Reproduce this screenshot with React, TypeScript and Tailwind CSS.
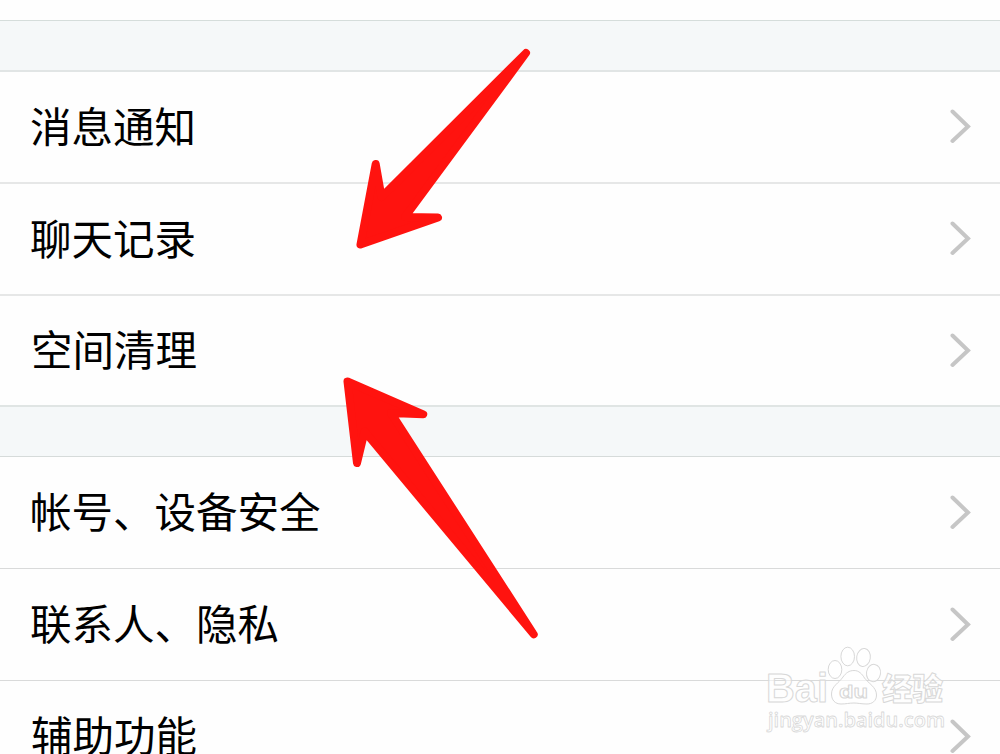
const notifyItems = ['消息通知', '聊天记录', '空间清理'];
const accountItems = ['帐号、设备安全', '联系人、隐私', '辅助功能'];

const Chevron = () => (
  <svg className="h-9 w-6 shrink-0" viewBox="0 0 24 36" fill="none">
    <path d="M4.500 2.500L20 17.500L4.500 32" stroke="#c6c6c6" strokeWidth="4" strokeLinecap="round" />
  </svg>
);

const Row = ({ label, className }: { label: string; className: string }) => (
  <button className={`flex w-full shrink-0 items-center justify-between pl-[30px] pr-[28px] text-left ${className}`}>
    <span className="pb-[3px] text-[41.5px] leading-none">{label}</span>
    <Chevron />
  </button>
);

const Arrows = () => (
  <svg className="pointer-events-none absolute inset-0" width="1000" height="754" viewBox="0 0 1000 754">
    <g fill="#ff130f" stroke="#ff130f" strokeWidth="8" strokeLinejoin="round">
      <path d="M526 53L381.500 197L375.700 164L360.500 244.500L438 217.500L405 217Z" />
      <path d="M347.500 381.500L423.200 414.300L391 413L533.700 634.300L364.600 431.500L357 463Z" />
    </g>
  </svg>
);

const Watermark = () => (
  <svg
    className="pointer-events-none absolute bottom-0 right-0"
    width="250"
    height="124"
    viewBox="0 0 250 124"
    fill="#fff"
    fillOpacity="0.6"
    stroke="#d8d8d8"
    strokeWidth="1"
    strokeLinejoin="round"
  >
    <text x="16" y="72" fontSize="40" fontWeight="700" textLength="62" lengthAdjust="spacingAndGlyphs" className="font-['Liberation_Sans',sans-serif]">Bai</text>
    <ellipse cx="85" cy="39.500" rx="6.800" ry="9" />
    <ellipse cx="97.700" cy="26.500" rx="6.800" ry="9.300" />
    <ellipse cx="113.500" cy="27.500" rx="6.800" ry="9" transform="rotate(8 113.500 27.500)" />
    <ellipse cx="123.500" cy="43" rx="7" ry="8.700" transform="rotate(8 123.500 43)" />
    <path d="M104 40.500C109 40.500 112 44 114.500 48C118 53 126.500 57 126.500 65C126.500 71 122 74 117 74C111 74 108 73 104 73C99 73 96 74 91 74C85 74 81.500 70 81.500 64C81.500 56 89 53 93 47C96 43 99 40.500 104 40.500Z" />
    <text x="89" y="68" fontSize="19" fontWeight="700" textLength="29" lengthAdjust="spacingAndGlyphs" className="font-['Liberation_Sans',sans-serif]">du</text>
    <text x="132" y="70" fontSize="31" fontWeight="900" textLength="61" lengthAdjust="spacingAndGlyphs" className="font-['Noto_Sans_CJK_SC',sans-serif]">经验</text>
    <text x="18" y="97" fontSize="20.500" fontWeight="600" strokeWidth="0.8" textLength="177" lengthAdjust="spacingAndGlyphs" className="font-['Open_Sans',sans-serif]">jingyan.baidu.com</text>
  </svg>
);

export default function App() {
  return (
    <main className="relative flex h-[754px] w-[1000px] flex-col overflow-hidden bg-[#fefefe] font-['Noto_Sans_CJK_SC',sans-serif] text-black">
      <div className="h-[21px] shrink-0 border-b border-[#d5dddb]" />
      <section className="shrink-0">
        <div className="h-[51px] border-b-2 border-[#e1e5e5] bg-[#f5f8f9]" />
        {notifyItems.map((item) => (
          <Row key={item} label={item} className="h-28 border-b-2 border-[#e6e7e7] last:h-[111px] last:border-[#e0e5e4] last:pl-[31px]" />
        ))}
      </section>
      <section className="shrink-0">
        <div className="h-[50px] border-b border-[#d6dbda] bg-[#f5f8f9]" />
        {accountItems.map((item) => (
          <Row key={item} label={item} className="h-28 border-b border-[#d9dada] last:pl-[31px]" />
        ))}
      </section>
      <Arrows />
      <Watermark />
    </main>
  );
}
